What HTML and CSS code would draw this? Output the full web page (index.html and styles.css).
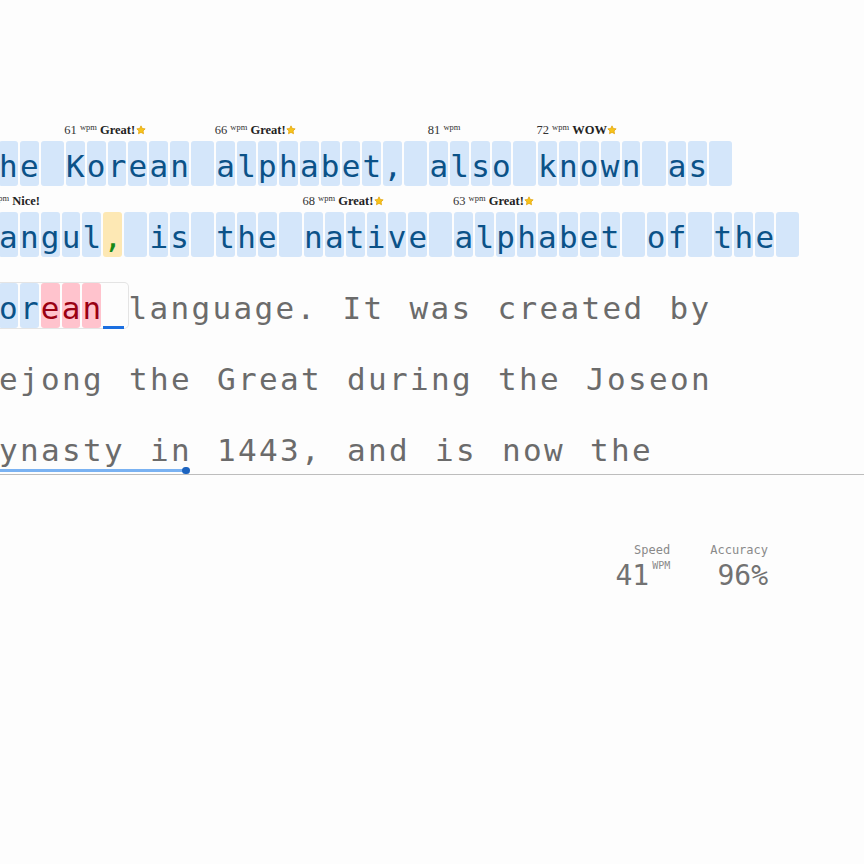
FILE: index.html
```html
<!DOCTYPE html>
<html>
<head>
<meta charset="utf-8">
<title>Typing test</title>
<link rel="stylesheet" href="styles.css">
</head>
<body>
<svg width="0" height="0" class="defs">
  <symbol id="star" viewBox="0 0 24 24"><path d="M12 2l3.09 6.26L22 9.27l-5 4.87 1.18 6.88L12 17.77l-6.18 3.25L7 14.14 2 9.27l6.91-1.01L12 2z" fill="#f6c31c" stroke="#e09c00" stroke-width="1.6" stroke-linejoin="round"/></symbol>
</svg>
<div class="typing">
  <div class="line">
    <span class="w"><span class="c">T</span><span class="c">h</span><span class="c">e</span><span class="c s"></span></span>
    <span class="w"><span class="note">61 <sup>wpm</sup> <b>Great!</b><svg class="star"><use href="#star"/></svg></span><span class="c">K</span><span class="c">o</span><span class="c">r</span><span class="c">e</span><span class="c">a</span><span class="c">n</span><span class="c s"></span></span>
    <span class="w"><span class="note">66 <sup>wpm</sup> <b>Great!</b><svg class="star"><use href="#star"/></svg></span><span class="c">a</span><span class="c">l</span><span class="c">p</span><span class="c">h</span><span class="c">a</span><span class="c">b</span><span class="c">e</span><span class="c">t</span><span class="c">,</span><span class="c s"></span></span>
    <span class="w"><span class="note">81 <sup>wpm</sup></span><span class="c">a</span><span class="c">l</span><span class="c">s</span><span class="c">o</span><span class="c s"></span></span>
    <span class="w"><span class="note">72 <sup>wpm</sup> <b>WOW</b><svg class="star"><use href="#star"/></svg></span><span class="c">k</span><span class="c">n</span><span class="c">o</span><span class="c">w</span><span class="c">n</span><span class="c s"></span></span>
    <span class="w"><span class="c">a</span><span class="c">s</span><span class="c s"></span></span>
  </div>
  <div class="line">
    <span class="w"><span class="note">57 <sup>wpm</sup> <b>Nice!</b></span><span class="c">H</span><span class="c">a</span><span class="c">n</span><span class="c">g</span><span class="c">u</span><span class="c">l</span><span class="c fix">,</span><span class="c s"></span></span>
    <span class="w"><span class="c">i</span><span class="c">s</span><span class="c s"></span></span>
    <span class="w"><span class="c">t</span><span class="c">h</span><span class="c">e</span><span class="c s"></span></span>
    <span class="w"><span class="note">68 <sup>wpm</sup> <b>Great!</b><svg class="star"><use href="#star"/></svg></span><span class="c">n</span><span class="c">a</span><span class="c">t</span><span class="c">i</span><span class="c">v</span><span class="c">e</span><span class="c s"></span></span>
    <span class="w"><span class="note">63 <sup>wpm</sup> <b>Great!</b><svg class="star"><use href="#star"/></svg></span><span class="c">a</span><span class="c">l</span><span class="c">p</span><span class="c">h</span><span class="c">a</span><span class="c">b</span><span class="c">e</span><span class="c">t</span><span class="c s"></span></span>
    <span class="w"><span class="c">o</span><span class="c">f</span><span class="c s"></span></span>
    <span class="w"><span class="c">t</span><span class="c">h</span><span class="c">e</span><span class="c s"></span></span>
  </div>
  <div class="line">
    <span class="w current"><span class="c">K</span><span class="c">o</span><span class="c">r</span><span class="c bad">e</span><span class="c bad">a</span><span class="c bad">n</span><span class="c s cur"></span></span>
    <span class="rest">language. It was created by</span>
  </div>
  <div class="line">
    <span class="rest">Sejong the Great during the Joseon</span>
  </div>
  <div class="line">
    <span class="rest">Dynasty in 1443, and is now the</span>
    <span class="ghost"></span>
  </div>
</div>
<div class="stats">
  <div class="stat">
    <div class="label">Speed</div>
    <div class="val">41<span class="unit">WPM</span></div>
  </div>
  <div class="stat">
    <div class="label">Accuracy</div>
    <div class="val">96%</div>
  </div>
</div>
</body>
</html>
```
FILE: styles.css
```css
html, body {
  margin: 0;
  padding: 0;
}
body {
  background: #fdfdfd;
  font-family: "DejaVu Sans Mono", "Liberation Mono", monospace;
  overflow: hidden;
  width: 864px;
  height: 864px;
}
.defs {
  position: absolute;
}
.typing {
  margin: 115px 0 0 -22px;
  padding-bottom: 4px;
  border-bottom: 1px solid #bdbdbd;
}
.line {
  display: flex;
  padding-top: 26px;
  font-size: 31px;
  position: relative;
}
.w {
  display: flex;
  position: relative;
}
.c {
  display: block;
  width: 18.9px;
  height: 45px;
  box-sizing: border-box;
  padding-top: 5px;
  line-height: 40px;
  margin-right: 2px;
  border-radius: 3px;
  text-align: center;
  background: #d4e6fa;
  color: #0b5288;
}
.s {
  width: 23.1px;
}
.bad {
  background: #ffc3cd;
  color: #9a0012;
}
.fix {
  background: #fde8b4;
  color: #168a16;
}
.current {
  border-radius: 4px;
  box-shadow: 0 0 0 1px #e4e4e4;
}
.cur {
  background: none;
  position: relative;
}
.cur::after {
  content: "";
  position: absolute;
  left: 0;
  width: 21px;
  bottom: -1px;
  height: 3px;
  background: #1b6fe0;
}
.rest {
  display: block;
  height: 45px;
  box-sizing: border-box;
  padding-top: 5px;
  line-height: 40px;
  white-space: pre;
  letter-spacing: 2.34px;
  word-spacing: 4px;
  color: #6b6b6b;
}
.note {
  position: absolute;
  left: -1.5px;
  bottom: calc(100% + 4px);
  white-space: nowrap;
  font-family: "Liberation Serif", serif;
  font-size: 12.5px;
  line-height: 14px;
  color: #333;
}
.note sup {
  font-size: 8.5px;
  line-height: 0;
  vertical-align: 4px;
}
.note b {
  font-weight: bold;
  color: #222;
}
.star {
  width: 10px;
  height: 10px;
  vertical-align: -1px;
  margin-left: 0.5px;
}
.ghost {
  position: absolute;
  left: 0;
  bottom: -2px;
  width: 208px;
  height: 3px;
  background: #7ab2f2;
}
.ghost::after {
  content: "";
  position: absolute;
  right: -3.75px;
  top: 50%;
  width: 7.5px;
  height: 7.5px;
  margin-top: -3.75px;
  border-radius: 50%;
  background: #1c63bf;
}
.stats {
  display: flex;
  justify-content: flex-end;
  gap: 40px;
  padding-right: 96px;
  margin-top: 66.5px;
}
.stat {
  text-align: right;
}
.label {
  font-size: 12px;
  line-height: 16px;
  margin-bottom: 2px;
  color: #8a8a8a;
}
.val {
  font-size: 28px;
  line-height: 32px;
  color: #727272;
}
.unit {
  font-size: 10px;
  line-height: 12px;
  vertical-align: top;
  margin-left: 3px;
  color: #8a8a8a;
}
```
